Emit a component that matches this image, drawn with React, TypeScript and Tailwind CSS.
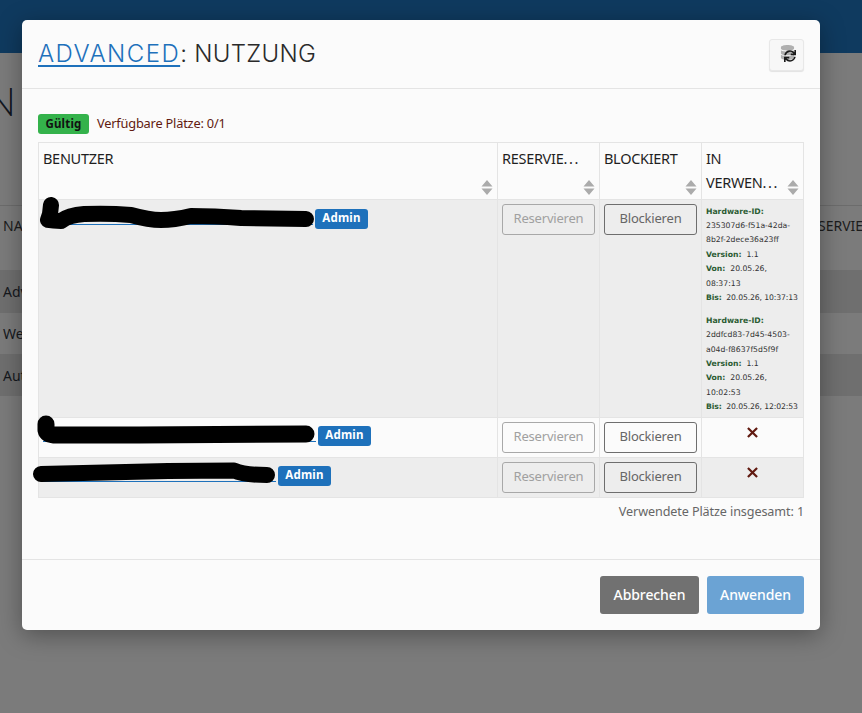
import React, { FC } from "react";
import { FaDatabase, FaSync } from "react-icons/fa";

const sans = "font-['Noto_Sans',sans-serif]";

interface Lease {
  id: string[];
  from: [string, string];
  to: string;
}

const leases: Lease[] = [
  { id: ["235307d6-f51a-42da-", "8b2f-2dece36a23ff"], from: ["20.05.26,", "08:37:13"], to: "20.05.26, 10:37:13" },
  { id: ["2ddfcd83-7d45-4503-", "a04d-f8637f5d5f9f"], from: ["20.05.26,", "10:02:53"], to: "20.05.26, 12:02:53" },
];

const SortIcon: FC = () => (
  <svg width="12" height="15" viewBox="0 0 12 15" className="fill-[#ababab]">
    <path d="M6 0 L11.5 6.5 H0.5 Z M0.5 8.5 H11.5 L6 15 Z" />
  </svg>
);

const HeaderCell: FC<{ label: string[] }> = ({ label }) => (
  <th className="relative h-[57px] border border-[#e4e4e4] px-[4px] pt-[3px] text-left align-top text-[14.5px] font-normal leading-[24px] tracking-[-0.3px] text-[#1f1f1f]">
    {label.map((line) => (
      <div key={line}>
        {line.replace("...", "")}
        {line.endsWith("...") && <span className="tracking-[1.6px]">...</span>}
      </div>
    ))}
    <span className="absolute bottom-[4px] right-[4px] flex">
      <SortIcon />
    </span>
  </th>
);

const Scribble: FC<{ d: string; width: number }> = ({ d, width }) => (
  <svg className="pointer-events-none absolute left-0 top-0 overflow-visible" width="1" height="1">
    <path d={d} fill="none" stroke="#000" strokeWidth={width} strokeLinecap="round" strokeLinejoin="round" />
  </svg>
);

const Actions: FC = () => (
  <>
    <td className="border border-[#e4e4e4] p-[4px] align-top">
      <button className="h-[31px] w-full rounded-[3px] border border-[#a8a8a8] pb-[2px] text-[13px] tracking-[-0.2px] text-[#a0a0a0]">Reservieren</button>
    </td>
    <td className="border border-[#e4e4e4] p-[4px] align-top">
      <button className="h-[31px] w-full rounded-[3px] border border-[#6e6e6e] pb-[2px] text-[13px] tracking-[-0.2px] text-[#666]">Blockieren</button>
    </td>
  </>
);

const UserName: FC<{ width: number }> = ({ width }) => (
  <div className="flex items-start gap-[2px]">
    <span className="block h-[16px] border-b border-[#1e71bb]" style={{ width }} />
    <span className="h-[20px] w-[53px] rounded-[3px] bg-[#1e71bb] text-center text-[11.5px] font-bold leading-[18px] tracking-[0.2px] text-white">Admin</span>
  </div>
);

const NoUse: FC = () => (
  <td className="border border-[#e4e4e4] pt-[9px] text-center align-top">
    <svg width="11" height="11" viewBox="0 0 12 12" className="mx-auto stroke-[#611a10]" strokeWidth="2.4">
      <path d="M1 1 L11 11 M11 1 L1 11" />
    </svg>
  </td>
);

const App: FC = () => {
  return (
    <div className={`relative h-[713px] w-[862px] overflow-hidden bg-[#7b7b7b] ${sans}`}>
      {/* page behind the dialog */}
      <div className="h-[53px] bg-[#0f3a5f]" />
      <div className="flex h-[73px] w-[16px] items-end justify-end overflow-hidden font-['Lato',sans-serif] text-[40px] font-light leading-[50px] text-[#11161f]">N</div>
      <div className="h-[79px]" />
      <div className="flex h-[65px] items-start justify-between border-t border-[#6c6c6c] pl-[3px] pt-[9px] text-[14px] text-[#1c1c1c]">
        <span>NAME</span>
        <span className="w-[44px] overflow-hidden">SERVIERT</span>
      </div>
      <div className="h-[43px] bg-[#6f6f6f] pl-[3px] pt-[11px] text-[14px] text-[#15181d]">Advanced</div>
      <div className="h-[41px] pl-[3px] pt-[10px] text-[14px] text-[#15181d]">Web</div>
      <div className="h-[42px] bg-[#6f6f6f] pl-[3px] pt-[11px] text-[14px] text-[#15181d]">Auto</div>

      {/* dialog */}
      <div className="absolute left-[22px] top-[20px] flex h-[610px] w-[798px] flex-col rounded-[5px] bg-[#fbfbfb] shadow-[0_5px_25px_rgba(0,0,0,0.35)]">
        <div className="flex h-[69px] items-start justify-between border-b border-[#e4e4e4] px-[16px] pt-[19px]">
          <h1 className="font-['Inter',sans-serif] text-[24px] font-[350] leading-[30px] tracking-[0.3px] text-[#2a2a2a]">
            <a className="tracking-[1.45px] text-[#1e71bb] underline decoration-2 underline-offset-[3px]">ADVANCED</a>: NUTZUNG
          </h1>
          <button className="relative h-[32px] w-[35px] rounded-[3px] border border-[#e8e8e8] bg-[#f7f7f7] shadow-[0_1px_1px_rgba(0,0,0,0.1)]">
            <FaDatabase className="absolute left-[10px] top-[5px] text-[15px] text-[#b0b0b0]" />
            <FaSync className="absolute left-[14px] top-[10px] text-[12px] text-[#1a1a1a]" />
          </button>
        </div>

        <div className="flex-1 px-[16px] pt-[25px]">
          <div className="flex h-[20px] items-center gap-[8px]">
            <span className="flex h-[20px] w-[51px] items-center justify-center rounded-[3px] bg-[#34b24b] text-[11.5px] font-bold tracking-[0.2px] text-[#111]">Gültig</span>
            <span className="pb-[2px] text-[12.8px] leading-[18px] tracking-[-0.2px] text-[#611a10]">Verfügbare Plätze: 0/1</span>
          </div>

          <table className="mt-[8px] w-[765px] table-fixed border-collapse">
            <colgroup>
              <col className="w-[459px]" />
              <col className="w-[102px]" />
              <col className="w-[102px]" />
              <col className="w-[102px]" />
            </colgroup>
            <thead>
              <tr>
                <HeaderCell label={["BENUTZER"]} />
                <HeaderCell label={["RESERVIE..."]} />
                <HeaderCell label={["BLOCKIERT"]} />
                <HeaderCell label={["IN", "VERWEN..."]} />
              </tr>
            </thead>
            <tbody>
              <tr className="h-[218px] bg-[#ededed]">
                <td className="relative border border-[#e4e4e4] px-[4px] pt-[9px] align-top">
                  <UserName width={270} />
                  <Scribble d="M12 5 L11 14 L9 20 Q14 21 22 21 Q30 15 45 14 Q70 13 92 15 Q110 20 122 20 Q135 20 152 16 Q175 16 202 18 L267 19" width={16} />
                </td>
                <Actions />
                <td className="border border-[#e4e4e4] px-[4px] pt-[4.5px] align-top font-['DejaVu_Sans',sans-serif] text-[7.7px] leading-[14.4px] text-[#333]">
                  {leases.map((l) => (
                    <div key={l.id[0]} className="mb-[8.5px] whitespace-nowrap last:mb-0">
                      <div className="font-bold text-[#2b5c33]">Hardware-ID:</div>
                      <div>{l.id[0]}</div>
                      <div>{l.id[1]}</div>
                      <div><b className="text-[#2b5c33]">Version:</b>&nbsp; 1.1</div>
                      <div><b className="text-[#2b5c33]">Von:</b>&nbsp; {l.from[0]}</div>
                      <div>{l.from[1]}</div>
                      <div className="tracking-[-0.12px]"><b className="text-[#2b5c33]">Bis:</b>&nbsp; {l.to}</div>
                    </div>
                  ))}
                </td>
              </tr>
              <tr className="h-[40px]">
                <td className="relative border border-[#e4e4e4] px-[4px] pt-[8px] align-top">
                  <UserName width={273} />
                  <Scribble d="M7 6 L7 12 Q8 17 18 17 L100 17 L267 16" width={17} />
                </td>
                <Actions />
                <NoUse />
              </tr>
              <tr className="h-[40px] bg-[#ededed]">
                <td className="relative border border-[#e4e4e4] px-[4px] pt-[8px] align-top">
                  <UserName width={233} />
                  <Scribble d="M2 16 L129 13 L195 12.5 Q205 17 228 17" width={16} />
                </td>
                <Actions />
                <NoUse />
              </tr>
            </tbody>
          </table>
          <div className="mt-[4px] text-right text-[12.6px] leading-[20px] tracking-[-0.1px] text-[#666]">Verwendete Plätze insgesamt: 1</div>
        </div>

        <div className="flex h-[71px] items-start justify-end gap-[8px] border-t border-[#e4e4e4] pr-[16px] pt-[16px]">
          <button className="h-[38px] w-[99px] rounded-[3px] bg-[#717171] pb-[2px] text-[14px] font-medium tracking-[-0.1px] text-white">Abbrechen</button>
          <button className="h-[38px] w-[97px] rounded-[3px] bg-[#6ba3d4] pb-[2px] text-[14px] font-medium tracking-[-0.1px] text-white">Anwenden</button>
        </div>
      </div>
    </div>
  );
};

export default App;
